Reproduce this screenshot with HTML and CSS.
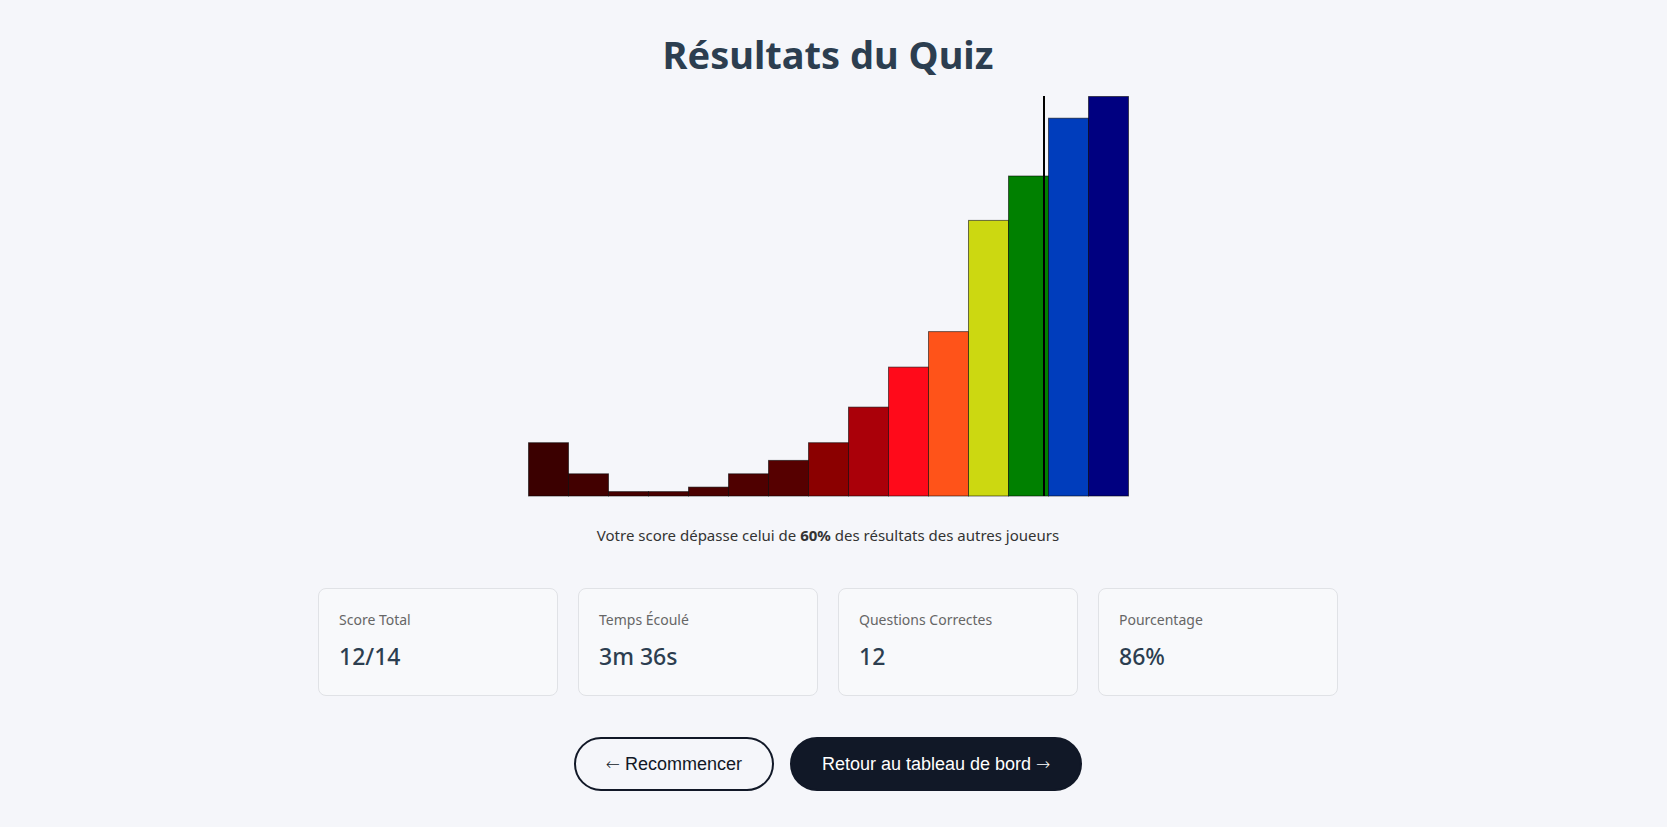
FILE: index.html
```html
<!DOCTYPE html>
<html lang="fr">
<head>
<meta charset="utf-8">
<title>Résultats du Quiz</title>
<link rel="stylesheet" href="styles.css">
</head>
<body>
<main class="results">
  <h1 class="title">Résultats du Quiz</h1>
  <div class="chart">
    <svg class="histogram" width="600" height="400" viewBox="0 0 600 400">
      <g class="bars">
        <rect x="0.5" y="346.7" width="40" height="53.3" fill="#3b0000"/>
        <rect x="40.5" y="377.8" width="40" height="22.2" fill="#420000"/>
        <rect x="80.5" y="395.6" width="40" height="4.4" fill="#470000"/>
        <rect x="120.5" y="395.6" width="40" height="4.4" fill="#490000"/>
        <rect x="160.5" y="391.1" width="40" height="8.9" fill="#4b0000"/>
        <rect x="200.5" y="377.8" width="40" height="22.2" fill="#4f0000"/>
        <rect x="240.5" y="364.4" width="40" height="35.6" fill="#560000"/>
        <rect x="280.5" y="346.7" width="40" height="53.3" fill="#8b0000"/>
        <rect x="320.5" y="311.1" width="40" height="88.9" fill="#aa0009"/>
        <rect x="360.5" y="271.1" width="40" height="128.9" fill="#ff0a1a"/>
        <rect x="400.5" y="235.6" width="40" height="164.4" fill="#ff5319"/>
        <rect x="440.5" y="124.4" width="40" height="275.6" fill="#ccd811"/>
        <rect x="480.5" y="80" width="40" height="320" fill="#008000"/>
        <rect x="520.5" y="22.2" width="40" height="377.8" fill="#003dbc"/>
        <rect x="560.5" y="0.5" width="40" height="399.5" fill="#000080"/>
      </g>
      <line class="marker" x1="516" y1="0" x2="516" y2="400"/>
    </svg>
  </div>
  <p class="percentile">Votre score dépasse celui de <strong>60%</strong> des résultats des autres joueurs</p>
  <section class="stats">
    <div class="stat-card">
      <div class="stat-label">Score Total</div>
      <div class="stat-value">12/14</div>
    </div>
    <div class="stat-card">
      <div class="stat-label">Temps Écoulé</div>
      <div class="stat-value">3m 36s</div>
    </div>
    <div class="stat-card">
      <div class="stat-label">Questions Correctes</div>
      <div class="stat-value">12</div>
    </div>
    <div class="stat-card">
      <div class="stat-label">Pourcentage</div>
      <div class="stat-value">86%</div>
    </div>
  </section>
  <div class="actions">
    <button class="btn btn-outline" type="button"><span class="arrow">←</span> Recommencer</button>
    <button class="btn btn-solid" type="button">Retour au tableau de bord <span class="arrow">→</span></button>
  </div>
</main>
</body>
</html>
```

FILE: styles.css
```css
* { box-sizing: border-box; }

html, body {
  margin: 0;
  padding: 0;
  background: #f5f6fa;
}

body {
  font-family: "Noto Sans", "Open Sans", sans-serif;
  color: #2c3e50;
  padding-right: 11px;
}

.results {
  display: flex;
  flex-direction: column;
  align-items: center;
  padding-top: 29px;
}

.title {
  margin: 0;
  font-size: 38px;
  line-height: 50px;
  font-weight: 700;
  color: #2c3e50;
}

.chart {
  margin-top: 17px;
  width: 600px;
  height: 400px;
}

.histogram {
  display: block;
  overflow: visible;
}

.bars rect {
  stroke: rgba(0, 0, 0, 0.55);
  stroke-width: 1;
}

.marker {
  stroke: #000;
  stroke-width: 2;
}

.percentile {
  margin: 27px 0 0;
  font-size: 15px;
  line-height: 24px;
  color: #333;
}

.percentile strong {
  font-weight: 700;
}

.stats {
  margin-top: 41px;
  width: 1020px;
  display: grid;
  grid-template-columns: repeat(4, 1fr);
  gap: 20px;
}

.stat-card {
  background: #f8f9fb;
  border: 1px solid #e0e2e6;
  border-radius: 8px;
  padding: 20px 20px 21px;
}

.stat-label {
  font-size: 14px;
  line-height: 21px;
  color: #666;
  margin-bottom: 8px;
}

.stat-value {
  font-size: 23px;
  line-height: 36px;
  font-weight: 500;
  color: #2c3e50;
}

.actions {
  margin-top: 41px;
  display: flex;
  gap: 16px;
}

.btn {
  font-family: "Liberation Sans", Arial, sans-serif;
  font-size: 18px;
  height: 54px;
  padding: 0 30px;
  border: 2px solid #111827;
  border-radius: 27px;
  display: inline-flex;
  align-items: center;
  white-space: pre;
  cursor: pointer;
}

.arrow {
  font-family: "DejaVu Sans", sans-serif;
  font-size: 17px;
  font-weight: 300;
}

.btn-outline {
  background: transparent;
  color: #111827;
}

.btn-solid {
  background: #111827;
  color: #fff;
}
```
